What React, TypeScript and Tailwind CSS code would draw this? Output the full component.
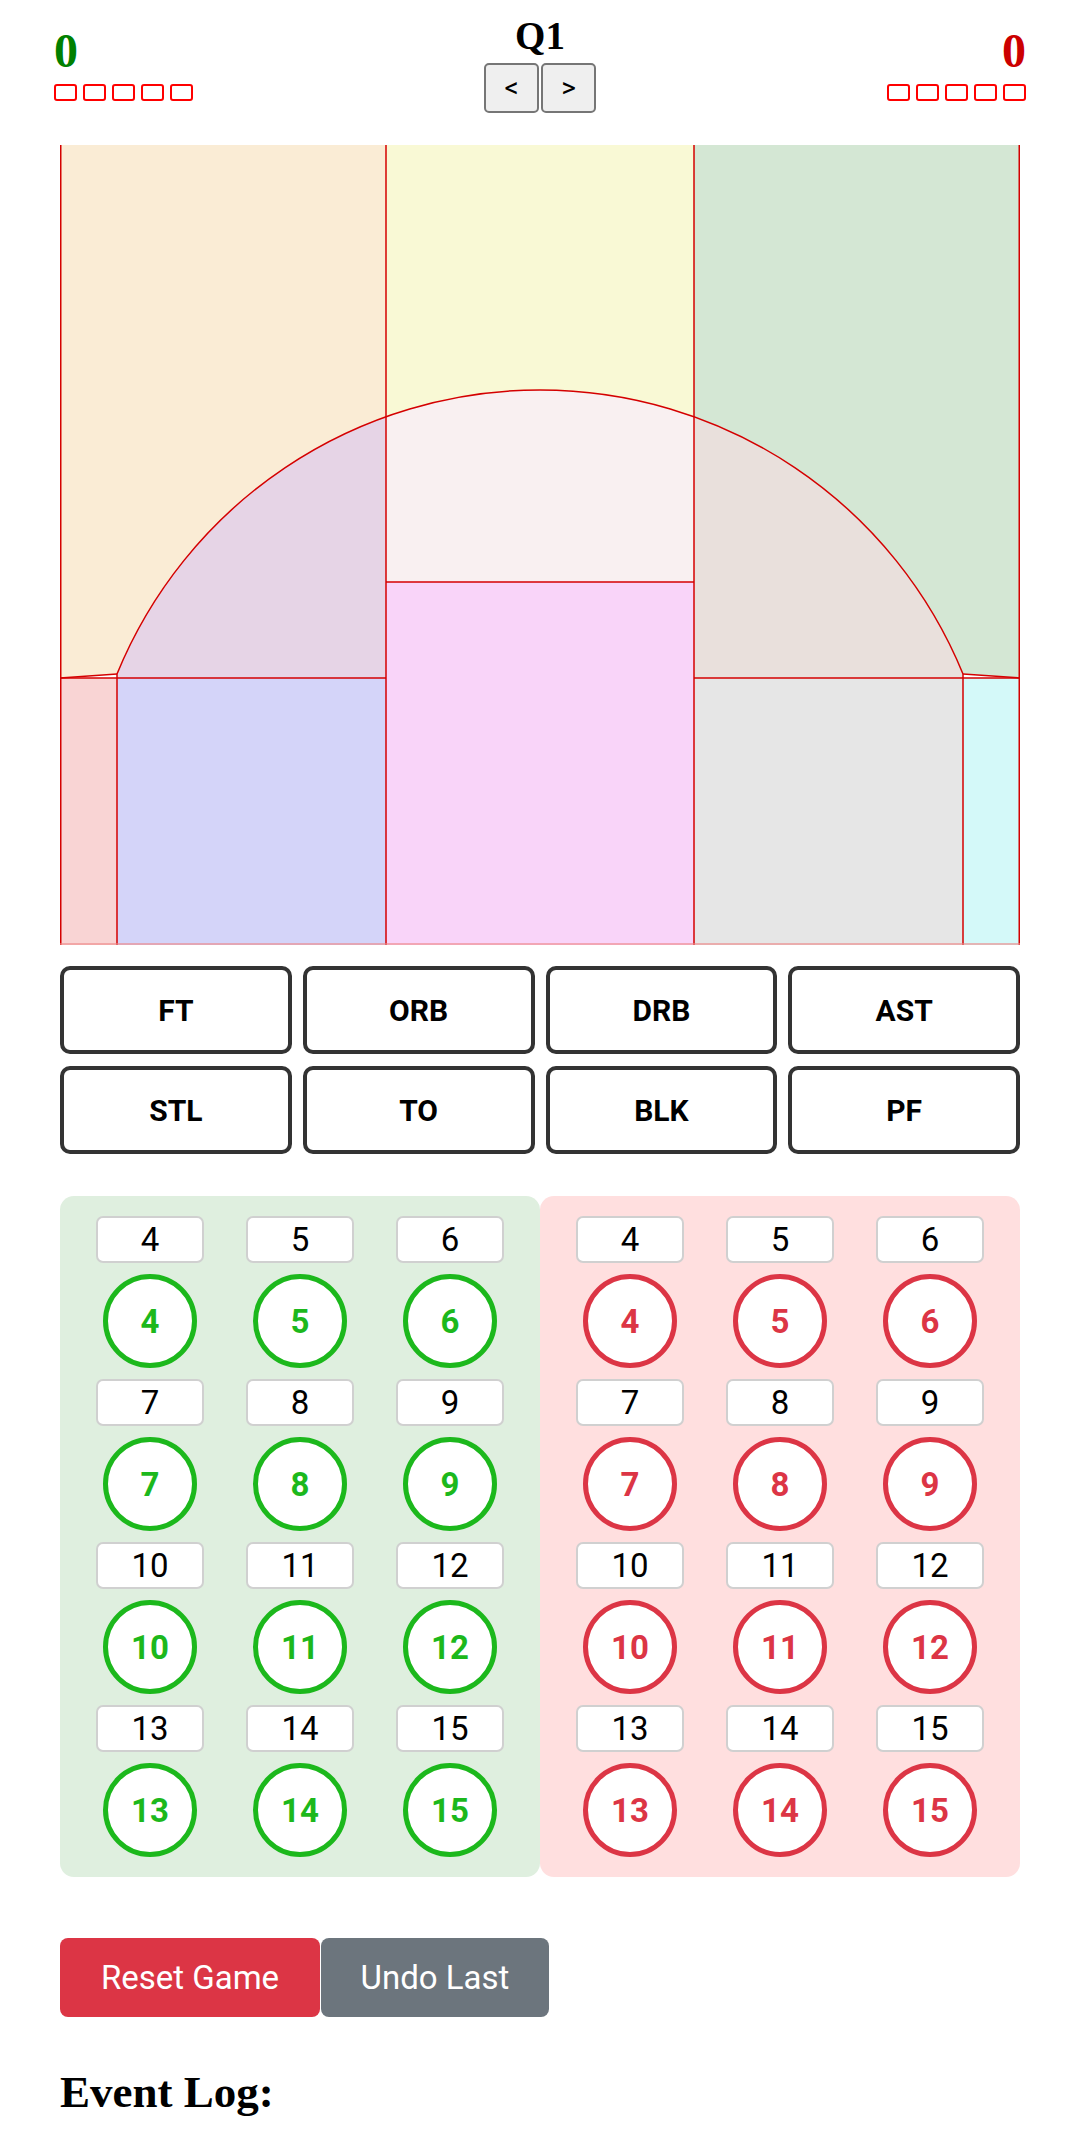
import React from "react";

const serif = { fontFamily: '"Liberation Serif", "Times New Roman", serif' };

function FoulBoxes({ align }: { align: "start" | "end" }) {
  return (
    <div className={`flex gap-[6px] ${align === "end" ? "justify-end" : "justify-start"}`}>
      {[0, 1, 2, 3, 4].map((i) => (
        <div key={i} className="w-[23px] h-[17px] border-2 border-[#ff0000] rounded-[3px] bg-white" />
      ))}
    </div>
  );
}

function Court() {
  const arcY = 271.7;
  return (
    <svg viewBox="0 0 960 800" width="960" height="800" className="block">
      <path d={`M0,0 H326 V${arcY} A457,457 0 0 0 57,529 L0,533 Z`} fill="#faecd5" />
      <path d={`M326,0 H634 V${arcY} A457,457 0 0 0 326,${arcY} Z`} fill="#f9f9d5" />
      <path d={`M634,0 H960 V533 L903,529 A457,457 0 0 0 634,${arcY} Z`} fill="#d4e7d4" />
      <path d={`M57,529 A457,457 0 0 1 326,${arcY} V533 H57 Z`} fill="#e6d4e6" />
      <path d={`M326,${arcY} A457,457 0 0 1 634,${arcY} V437 H326 Z`} fill="#f9f0f1" />
      <path d={`M634,${arcY} A457,457 0 0 1 903,529 V533 H634 Z`} fill="#e9e0dc" />
      <rect x="0" y="533" width="57" height="267" fill="#f9d4d4" />
      <rect x="57" y="533" width="269" height="267" fill="#d4d4f9" />
      <rect x="326" y="437" width="308" height="363" fill="#f9d4f9" />
      <rect x="634" y="533" width="269" height="267" fill="#e6e6e6" />
      <rect x="903" y="533" width="57" height="267" fill="#d4f9f9" />
      <g stroke="#d40000" strokeWidth="1.5" fill="none">
        <line x1="0.75" y1="0" x2="0.75" y2="800" />
        <line x1="959.25" y1="0" x2="959.25" y2="800" />
        <line x1="326" y1="0" x2="326" y2="800" />
        <line x1="634" y1="0" x2="634" y2="800" />
        <line x1="57" y1="529" x2="57" y2="800" />
        <line x1="903" y1="529" x2="903" y2="800" />
        <line x1="0" y1="533" x2="326" y2="533" />
        <line x1="634" y1="533" x2="960" y2="533" />
        <line x1="326" y1="437" x2="634" y2="437" />
        <line x1="0" y1="533" x2="57" y2="529" />
        <line x1="903" y1="529" x2="960" y2="533" />
        <path d="M57,529 A457,457 0 0 1 903,529" />
      </g>
      <line x1="0" y1="799" x2="960" y2="799" stroke="#e88" strokeWidth="2" opacity="0.6" />
    </svg>
  );
}

const actions = ["FT", "ORB", "DRB", "AST", "STL", "TO", "BLK", "PF"];
const players = [4, 5, 6, 7, 8, 9, 10, 11, 12, 13, 14, 15];

function TeamPanel({ team }: { team: "home" | "away" }) {
  const home = team === "home";
  return (
    <div
      className={`${home ? "bg-[#dfefdf]" : "bg-[#ffdfdf]"} rounded-[14px] pt-[20px] pb-[20px] px-[15px] grid grid-cols-3 gap-y-[11px]`}
    >
      {players.map((n) => (
        <div key={n} className="flex flex-col items-center gap-[11px]">
          <div className="w-[108px] h-[47px] bg-white border-2 border-[#d0d0d0] rounded-[7px] flex items-center justify-center text-[33px] text-black leading-none">
            {n}
          </div>
          <div
            className={`w-[94px] h-[94px] rounded-full bg-white border-[5px] flex items-center justify-center font-bold text-[33px] leading-none ${
              home ? "border-[#1cb81c] text-[#1cb81c]" : "border-[#dc3545] text-[#dc3545]"
            }`}
          >
            {n}
          </div>
        </div>
      ))}
    </div>
  );
}

export default function App() {
  return (
    <div className="w-[1080px] bg-white min-h-[2152px]" style={{ fontFamily: 'Roboto, "Liberation Sans", Arial, sans-serif' }}>
      <div className="flex justify-between items-start px-[54px]">
        <div className="mt-[27px] flex flex-col items-start">
          <div className="text-[48px] leading-none font-bold text-[#008000]" style={serif}>
            0
          </div>
          <div className="mt-[9px]">
            <FoulBoxes align="start" />
          </div>
        </div>
        <div className="mt-[16px] flex flex-col items-center">
          <div className="text-[39px] leading-none font-bold text-black" style={serif}>
            Q1
          </div>
          <div className="mt-[8px] flex gap-[2px]">
            <button className="w-[55px] h-[50px] bg-[#efefef] border-2 border-[#767676] rounded-[5px] text-[28px] leading-none text-black flex items-center justify-center">
              &lt;
            </button>
            <button className="w-[55px] h-[50px] bg-[#efefef] border-2 border-[#767676] rounded-[5px] text-[28px] leading-none text-black flex items-center justify-center">
              &gt;
            </button>
          </div>
        </div>
        <div className="mt-[27px] flex flex-col items-end">
          <div className="text-[48px] leading-none font-bold text-[#cc0000]" style={serif}>
            0
          </div>
          <div className="mt-[9px]">
            <FoulBoxes align="end" />
          </div>
        </div>
      </div>

      <div className="px-[60px]">
        <div className="mt-[32px]">
          <Court />
        </div>

        <div className="mt-[21px] grid grid-cols-4 gap-x-[11px] gap-y-[12px]">
          {actions.map((a) => (
            <button
              key={a}
              className="h-[88px] bg-white border-[4px] border-[#333333] rounded-[10px] font-bold text-[30px] text-black flex items-center justify-center"
            >
              {a}
            </button>
          ))}
        </div>

        <div className="mt-[42px] grid grid-cols-2">
          <TeamPanel team="home" />
          <TeamPanel team="away" />
        </div>

        <div className="mt-[61px] flex gap-[1px]">
          <button className="h-[79px] w-[260px] bg-[#dc3545] text-white text-[33px] rounded-[8px] flex items-center justify-center">
            Reset Game
          </button>
          <button className="h-[79px] w-[228px] bg-[#6c757d] text-white text-[33px] rounded-[8px] flex items-center justify-center">
            Undo Last
          </button>
        </div>

        <div className="mt-[53px] text-[45px] leading-none font-bold text-black" style={serif}>
          Event Log:
        </div>
      </div>
    </div>
  );
}
